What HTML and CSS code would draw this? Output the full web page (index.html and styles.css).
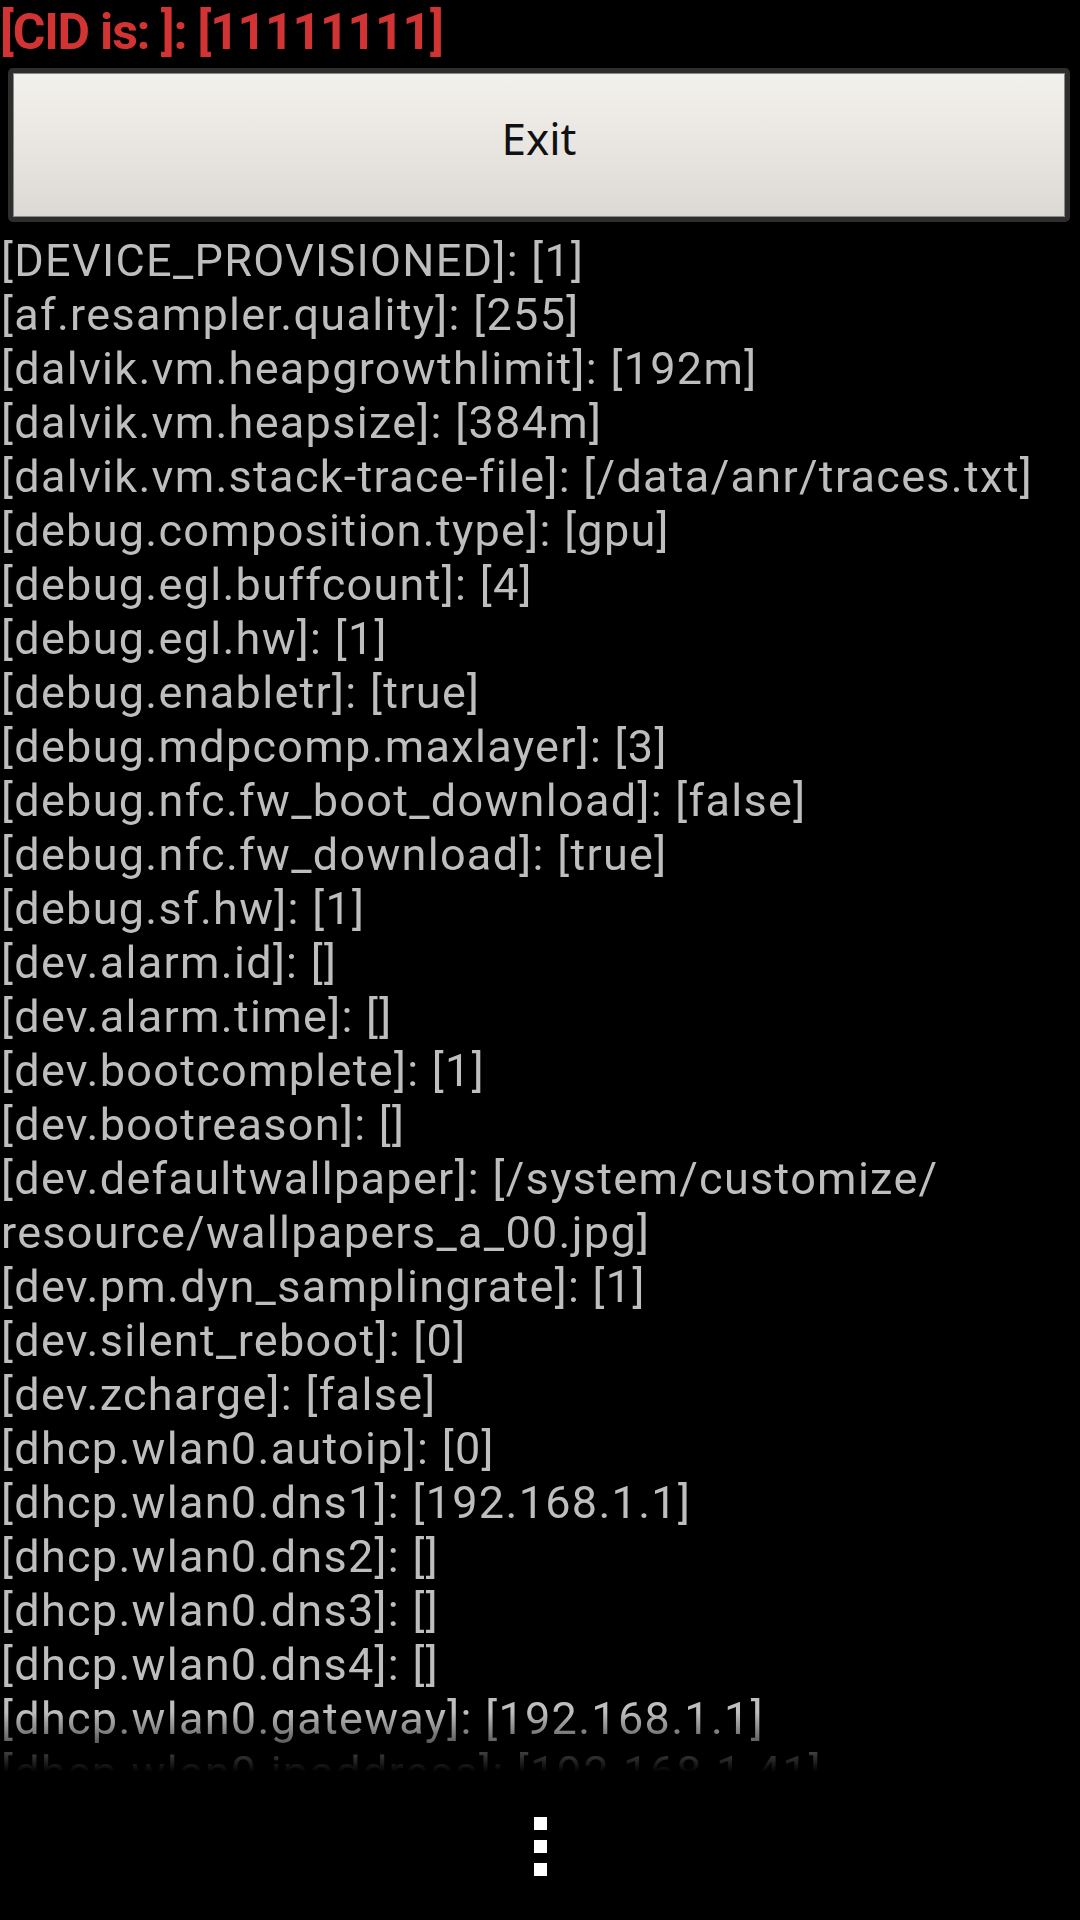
FILE: index.html
```html
<!DOCTYPE html>
<html>
<head>
<meta charset="utf-8">
<link rel="stylesheet" href="styles.css">
</head>
<body>
<div class="screen">
  <div class="cid">[CID is: ]: [11111111]</div>
  <div class="btn-wrap">
    <button class="exit">Exit</button>
  </div>
  <div class="props">
    <div class="line">[DEVICE_PROVISIONED]: [1]</div>
    <div class="line">[af.resampler.quality]: [255]</div>
    <div class="line">[dalvik.vm.heapgrowthlimit]: [192m]</div>
    <div class="line">[dalvik.vm.heapsize]: [384m]</div>
    <div class="line">[dalvik.vm.stack-trace-file]: [/data/anr/traces.txt]</div>
    <div class="line">[debug.composition.type]: [gpu]</div>
    <div class="line">[debug.egl.buffcount]: [4]</div>
    <div class="line">[debug.egl.hw]: [1]</div>
    <div class="line">[debug.enabletr]: [true]</div>
    <div class="line">[debug.mdpcomp.maxlayer]: [3]</div>
    <div class="line">[debug.nfc.fw_boot_download]: [false]</div>
    <div class="line">[debug.nfc.fw_download]: [true]</div>
    <div class="line">[debug.sf.hw]: [1]</div>
    <div class="line">[dev.alarm.id]: []</div>
    <div class="line">[dev.alarm.time]: []</div>
    <div class="line">[dev.bootcomplete]: [1]</div>
    <div class="line">[dev.bootreason]: []</div>
    <div class="line">[dev.defaultwallpaper]: [/system/customize/<br>resource/wallpapers_a_00.jpg]</div>
    <div class="line">[dev.pm.dyn_samplingrate]: [1]</div>
    <div class="line">[dev.silent_reboot]: [0]</div>
    <div class="line">[dev.zcharge]: [false]</div>
    <div class="line">[dhcp.wlan0.autoip]: [0]</div>
    <div class="line">[dhcp.wlan0.dns1]: [192.168.1.1]</div>
    <div class="line">[dhcp.wlan0.dns2]: []</div>
    <div class="line">[dhcp.wlan0.dns3]: []</div>
    <div class="line">[dhcp.wlan0.dns4]: []</div>
    <div class="line">[dhcp.wlan0.gateway]: [192.168.1.1]</div>
    <div class="line">[dhcp.wlan0.ipaddress]: [192.168.1.41]</div>
  </div>
  <div class="menubar">
    <div class="overflow">
      <span class="dot"></span>
      <span class="dot"></span>
      <span class="dot"></span>
    </div>
  </div>
</div>
</body>
</html>
```
FILE: styles.css
```css
html, body {
  margin: 0;
  padding: 0;
  background: #000;
}
.screen {
  width: 1080px;
  height: 1920px;
  display: flex;
  flex-direction: column;
  background: #000;
  overflow: hidden;
}
.cid {
  font-family: Roboto, "Liberation Sans", sans-serif;
  font-weight: 700;
  font-size: 50px;
  letter-spacing: -1.2px;
  line-height: 64px;
  color: #d23434;
  white-space: nowrap;
  height: 64px;
}
.btn-wrap {
  padding: 4px 10px 0 8px;
}
.exit {
  display: block;
  width: 100%;
  height: 154px;
  margin: 0;
  padding: 0 0 14px 0;
  border: 5px solid #2e2e2e;
  border-radius: 5px;
  box-shadow: inset 0 0 0 1px #8a8a88;
  background: linear-gradient(to bottom, #f3f1ed 0%, #e9e6e1 50%, #dcd9d4 100%);
  font-family: "Noto Sans", "Open Sans", sans-serif;
  font-size: 44px;
  color: #111;
}
.props {
  margin-top: 12px;
  height: 1538px;
  overflow: hidden;
  font-family: Roboto, "Liberation Sans", sans-serif;
  font-size: 45px;
  letter-spacing: 1.3px;
  line-height: 54px;
  color: #bebebe;
  -webkit-mask-image: linear-gradient(to bottom, #000 0, #000 calc(100% - 60px), transparent 100%);
  mask-image: linear-gradient(to bottom, #000 0, #000 calc(100% - 60px), transparent 100%);
}
.line {
  padding-left: 1px;
  white-space: nowrap;
}
.menubar {
  flex: 1;
  display: flex;
  align-items: center;
  justify-content: center;
}
.overflow {
  display: flex;
  flex-direction: column;
  gap: 10px;
  align-items: center;
}
.dot {
  display: block;
  width: 13px;
  height: 13px;
  background: #fff;
}
```
